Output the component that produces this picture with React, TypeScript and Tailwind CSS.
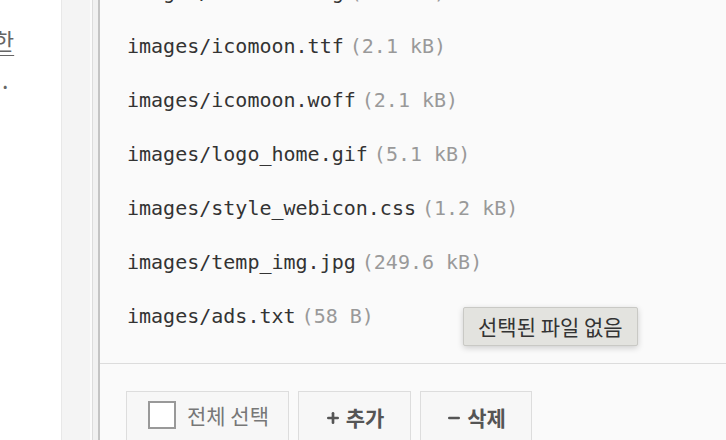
import { Minus, Plus } from 'lucide-react';

const files = [
  { name: 'images/icomoon.svg', size: '5.4 kB' },
  { name: 'images/icomoon.ttf', size: '2.1 kB' },
  { name: 'images/icomoon.woff', size: '2.1 kB' },
  { name: 'images/logo_home.gif', size: '5.1 kB' },
  { name: 'images/style_webicon.css', size: '1.2 kB' },
  { name: 'images/temp_img.jpg', size: '249.6 kB' },
  { name: 'images/ads.txt', size: '58 B' },
];

const kr = { fontFamily: '"Noto Sans CJK KR", "Noto Sans", sans-serif' };

const App = () => {
  return (
    <div className="relative flex h-[440px] w-[726px] overflow-hidden bg-white">
      {/* clipped text column on the left */}
      <div className="w-[61px] shrink-0 overflow-hidden pt-[20px] text-[23px] leading-[40px] text-[#666]" style={kr}>
        <div className="-ml-[7px] whitespace-nowrap">
          <span className="underline decoration-1 underline-offset-[5px]">한</span>
        </div>
        <div className="ml-[2px] -mt-[1px] whitespace-nowrap">.</div>
      </div>

      {/* side strips */}
      <div className="w-[29px] shrink-0 border-l border-[#e8e8e8] bg-[#f4f4f4]" />
      <div className="w-[2px] shrink-0 bg-[#fbfbfb]" />
      <div className="w-[6px] shrink-0 border-l border-[#dcdcdc] bg-[#f1f1f1]" />
      <div className="w-[2px] shrink-0 bg-[#c4c4c4]" />

      {/* file list panel */}
      <div className="flex min-w-0 flex-1 flex-col bg-[#fafafa]">
        <ul className="-mt-[35px] pb-[20px]" style={{ fontFamily: '"DejaVu Sans Mono", monospace' }}>
          {files.map((f) => (
            <li key={f.name} className="flex h-[54px] items-center gap-[6px] pl-[27px] text-[20px] whitespace-nowrap">
              <span className="text-[#333]">{f.name}</span>
              <span className="text-[#999]">({f.size})</span>
            </li>
          ))}
        </ul>
        <div className="flex gap-[9px] border-t border-[#dcdcdc] pt-[27px] pl-[26px]" style={kr}>
          <button className="flex h-[60px] w-[163px] items-start gap-[11px] border border-[#dddddd] bg-[#f7f7f7] pt-[9px] pl-[21px] text-[21px] text-[#777]">
            <span className="h-[28px] w-[28px] border-2 border-[#999] bg-white" />
            <span className="leading-[28px]">전체 선택</span>
          </button>
          <button className="flex h-[60px] w-[113px] items-start justify-center gap-[5px] border border-[#dddddd] bg-[#f7f7f7] pt-[10px] text-[21px] font-bold text-[#555]">
            <Plus size={16} strokeWidth={4} className="mt-[8px]" />
            <span className="leading-[30px]">추가</span>
          </button>
          <button className="flex h-[60px] w-[112px] items-start justify-center gap-[5px] border border-[#dddddd] bg-[#f7f7f7] pt-[10px] text-[21px] font-bold text-[#555]">
            <Minus size={16} strokeWidth={4} className="mt-[8px]" />
            <span className="leading-[30px]">삭제</span>
          </button>
        </div>
      </div>

      {/* native title tooltip */}
      <div
        className="absolute top-[307px] left-[463px] rounded-[2px] border border-[#c9c9c5] bg-[#e3e3df] px-[14px] py-[3px] text-[21px] leading-[31px] text-[#333] shadow-[0_2px_6px_rgba(0,0,0,0.18)]"
        style={kr}
      >
        선택된 파일 없음
      </div>
    </div>
  );
};

export default App;
